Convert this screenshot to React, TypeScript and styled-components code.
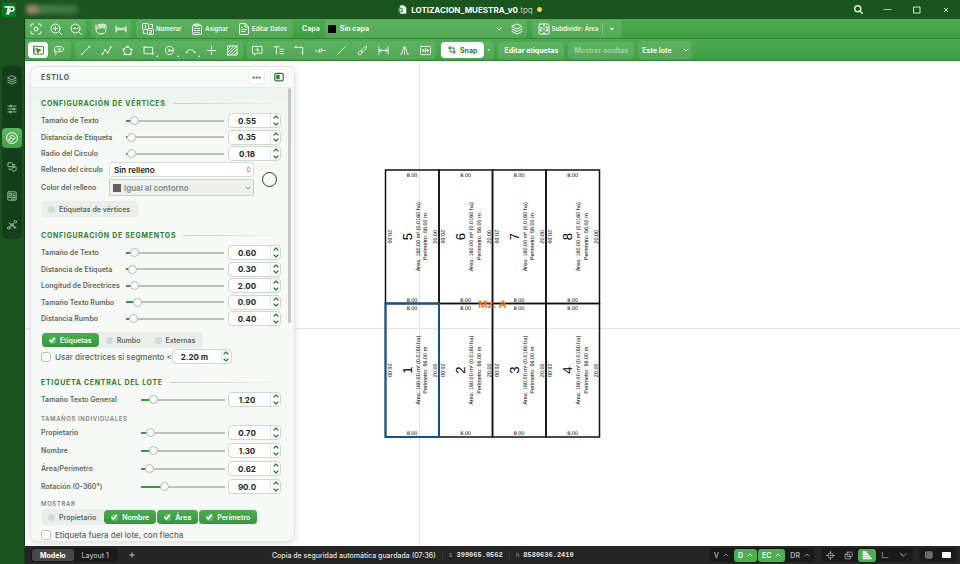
import React, { useId, useState } from "react";
import styled, { createGlobalStyle, css } from "styled-components";

const Global = createGlobalStyle`
  * { box-sizing: border-box; }
  html, body { margin: 0; padding: 0; }
  body { font-family: Inter, "Liberation Sans", sans-serif; font-size: 8px; overflow: hidden; }
  button, input, select { font: inherit; color: inherit; margin: 0; }
  button { border: 0; background: none; padding: 0; cursor: pointer; }
  h1, h2, h3, p { margin: 0; }
`;

/* ---------- icons ---------- */

const Svg = styled.svg<{ $size?: number; $w?: number }>`
  display: block;
  flex: none;
  width: ${(p) => p.$size ?? 12}px;
  height: ${(p) => p.$size ?? 12}px;
  fill: none;
  stroke: currentColor;
  stroke-width: ${(p) => p.$w ?? 2};
  stroke-linecap: round;
  stroke-linejoin: round;
`;

const glyphs: Record<string, React.ReactNode> = {
  fit: <><path d="M2 7V4a2 2 0 0 1 2-2h3M17 2h3a2 2 0 0 1 2 2v3M22 17v3a2 2 0 0 1-2 2h-3M7 22H4a2 2 0 0 1-2-2v-3" /><circle cx="12" cy="12" r="4" /></>,
  zoomIn: <><circle cx="11" cy="11" r="9" /><path d="m18 18 5 5M11 7v8M7 11h8" /></>,
  zoomOut: <><circle cx="11" cy="11" r="9" /><path d="m18 18 5 5M7 11h8" /></>,
  hand: <path d="M2 4v9c0 5 4 9 10 9s10-4 10-9V5a2 2 0 0 0-4 0v6V4a2 2 0 0 0-4 0v6V4a2 2 0 0 0-4 0v7V5a2 2 0 0 0-4 0v7c-1-1-3-1-4 0" />,
  measure: <path d="M2 6v12M22 6v12M3 12h18M6 9l-3 3 3 3M18 9l3 3-3 3M10 10v4M14 10v4" />,
  number: <><rect x="1" y="1" width="12" height="12" rx="2" /><rect x="11" y="11" width="12" height="12" rx="2" /><path d="M6 5l1-1v6M15 15h4v2l-4 3h4M17 3h4v5M3 16v5h5" /></>,
  clipboard: <><rect x="3" y="4" width="18" height="19" rx="3" /><path d="M8 2h8v4H8zM7 11h2M12 11h5M7 15h2M12 15h5M7 19h2M12 19h5" /></>,
  doc: <path d="M14 1H5a2 2 0 0 0-2 2v18a2 2 0 0 0 2 2h14a2 2 0 0 0 2-2V8zM14 1v7h7M7 13h10M7 17h7M7 9h2" />,
  layers: <path d="m12 2 10 5-10 5L2 7zM2 12l10 5 10-5M2 17l10 5 10-5" />,
  split: <><rect x="2" y="2" width="20" height="20" rx="2" /><path d="M12 2v5M12 11v3M12 18v4M5 9h3v3H5v4h3M15 8h4l-3 4h3v4h-4" /></>,
  pick: <><rect x="1" y="3" width="22" height="17" rx="1" /><path d="m8 8 9 3-4 2-2 4z" fill="currentColor" /><path d="M4 7v9" /></>,
  lasso: <><ellipse cx="13" cy="9" rx="10" ry="6" /><path d="M5 13c-3 1-3 4 0 4s3 4-1 5M10 9h7l-3 3" /></>,
  line: <><path d="M5 19 19 5" /><circle cx="4" cy="20" r="1" fill="currentColor" /><circle cx="20" cy="4" r="1" fill="currentColor" /></>,
  poly: <><path d="m3 20 6-9 6 6 6-12" /><circle cx="3" cy="20" r="1" fill="currentColor" /><circle cx="9" cy="11" r="1" fill="currentColor" /><circle cx="15" cy="17" r="1" fill="currentColor" /><circle cx="21" cy="5" r="1" fill="currentColor" /></>,
  penta: <><path d="m12 4 9 6-3 11H6L3 10z" /><circle cx="12" cy="4" r="1.5" fill="currentColor" /><circle cx="21" cy="10" r="1.5" fill="currentColor" /><circle cx="3" cy="10" r="1.5" fill="currentColor" /><circle cx="6" cy="20" r="1.5" fill="currentColor" /><circle cx="18" cy="20" r="1.5" fill="currentColor" /></>,
  rect: <><path d="M3 5h18v14H3z" /><circle cx="3" cy="5" r="1.5" fill="currentColor" /><circle cx="21" cy="19" r="1.5" fill="currentColor" /></>,
  circle: <><circle cx="12" cy="12" r="9" /><path d="M12 12h9" /><circle cx="12" cy="12" r="2" fill="currentColor" /></>,
  arc: <><path d="M3 16c3-8 15-8 18 0" /><circle cx="3" cy="16" r="1" fill="currentColor" /><circle cx="21" cy="16" r="1" fill="currentColor" /></>,
  cross: <path d="M12 3v18M3 12h18" />,
  hatch: <path d="M2 2h20v20H2zM2 9l7-7M2 16 16 2M2 22 22 2M9 22 22 9M16 22l6-6" />,
  note: <path d="M2 3h20v15H10l-5 4v-4H2zM12 7v7M8.500 10.500h7" />,
  text: <path d="M2 4h11M7.500 4v16M15 9h8M15 14h7M15 19h8" />,
  leader: <path d="M2 5h17v15M2 5l3-2M19 20l-2-3" />,
  breakLine: <path d="M1 13h6M17 12h6M9 16l2-8M13 16l2-8" />,
  slash: <path d="M4 20 20 4" />,
  brush: <path d="M21 3c-3-1-12 8-12 10l2 2c3 0 12-9 10-12zM9 13c-3-1-5 1-6 4s1 5 4 4 5-3 4-6" />,
  dim: <path d="M2 4v16M22 4v16M3 12h18M7 9l-4 3 4 3M17 9l4 3-4 3" />,
  road: <path d="M3 20h3L10 4M21 20h-3L14 4M12 5v3M12 11v3M12 17v3" />,
  fitBox: <><rect x="1" y="3" width="22" height="18" rx="2" /><path d="M5 12h14M8 9l-3 3 3 3M16 9l3 3-3 3M12 8v8" /></>,
  snap: <path d="M6 1v17h17M1 6h17v17" />,
  sliders: <><path d="M2 5h20M2 12h20M2 19h20" /><circle cx="9" cy="5" r="2" fill="#153f1b" /><circle cx="16" cy="12" r="2" fill="#153f1b" /><circle cx="8" cy="19" r="2" fill="#153f1b" /></>,
  palette: <><path d="M12 1C6 1 1 6 1 12s5 11 11 11c6 0 11-5 11-11S18 1 12 1z" /><path d="M7 10c3-5 10-3 11 1s-3 2-4 4 0 4-3 4-4-2-5-5" /><path d="m5 17 5-6 4 4" /></>,
  shapes: <><rect x="2" y="2" width="11" height="9" rx="2" /><rect x="12" y="10" width="10" height="12" rx="4" /><path d="M15 13h4M5 14v4h4M16 6h3" /></>,
  sheet: <><rect x="2" y="2" width="20" height="20" rx="2" /><path d="M6 6h5v5H6zM14 7h5M14 11h5M2 15h20M12 15v7M17 15v7" /></>,
  nodes: <><circle cx="4" cy="19" r="3" /><circle cx="12" cy="12" r="3" /><circle cx="20" cy="4" r="3" /><circle cx="19" cy="18" r="2" /><path d="M6 17l4-3M14 10l4-4M14 14l3 3M5 7l5 4" /></>,
  down: <path d="m4 8 8 8 8-8" />,
  up: <path d="m4 16 8-8 8 8" />,
  updown: <path d="m7 9 5-5 5 5M7 15l5 5 5-5" />,
  caret: <path d="M6 9h12l-6 7z" fill="currentColor" />,
  search: <><circle cx="10" cy="10" r="8" /><path d="m16 16 7 7" /></>,
  minus: <path d="M2 12h20" />,
  square: <path d="M3 3h18v18H3z" />,
  close: <path d="m5 5 14 14M19 5 5 19" />,
  dots: <><circle cx="4" cy="12" r="1.500" fill="currentColor" /><circle cx="12" cy="12" r="1.500" fill="currentColor" /><circle cx="20" cy="12" r="1.500" fill="currentColor" /></>,
  dock: <><rect x="2" y="3" width="20" height="18" rx="3" /><path d="M7 8h5v8H7z" fill="currentColor" /></>,
  plus: <path d="M12 3v18M3 12h18" />,
  target: <><circle cx="12" cy="12" r="7" /><circle cx="12" cy="12" r="1.500" fill="currentColor" /><path d="M12 1v5M12 18v5M1 12h5M18 12h5" /></>,
  overlap: <><rect x="8" y="3" width="14" height="12" rx="2" /><path d="M8 8H3v13h14v-6M8 9h7v6" /></>,
  weights: <path d="M3 5h7M3 10h11M3 15h15M3 20h19" strokeWidth="4" />,
  ortho: <path d="M4 3v17h17" />,
  polar: <path d="M3 6c4 0 6 5 9 10l10-8M7 12h4" />,
  grid: <path d="M3 3h18v18H3zM9 3v18M15 3v18M3 9h18M3 15h18" />,
};

const Icon = ({ name, size, w }: { name: string; size?: number; w?: number }) => (
  <Svg viewBox="0 0 24 24" $size={size} $w={w} aria-hidden="true">{glyphs[name]}</Svg>
);

/* ---------- frame ---------- */

const Page = styled.div`
  height: 100vh;
  display: flex;
  flex-direction: column;
  background: #1b521f;
`;

const TitleBar = styled.header`
  height: 19px;
  flex: none;
  display: grid;
  grid-template-columns: 1fr auto 1fr;
  align-items: center;
  padding: 0 10px 0 0;
  background: #1a541e;
  color: #fff;
`;

const Brand = styled.div`
  display: flex;
  align-items: center;
  gap: 10px;
  padding-left: 2px;
`;

const Logo = styled.svg`
  width: 14px;
  height: 14px;
  display: block;
`;

const Account = styled.div`
  width: 52px;
  height: 9px;
  border-radius: 4px;
  filter: blur(2px);
  background: linear-gradient(90deg, #a08570 0 10px, #4a7b4d 13px, #427545);
`;

const FileTitle = styled.h1`
  display: flex;
  align-items: center;
  gap: 4px;
  font-size: 8px;
  font-weight: 700;
  margin-right: 10px;
  small { font-size: 8px; font-weight: 400; color: #b9d3ba; }
`;

const Unsaved = styled.i`
  width: 5px;
  height: 5px;
  border-radius: 50%;
  background: #f0d24c;
`;

const WindowButtons = styled.div`
  display: flex;
  justify-content: flex-end;
  align-items: center;
  gap: 20px;
  color: #d3ecd4;
`;

const PlainButton = styled.button`
  display: grid;
  place-items: center;
  min-width: 9px;
  height: 12px;
  color: inherit;
`;

const Body = styled.div`
  flex: 1;
  min-height: 0;
  display: flex;
`;

const Rail = styled.nav`
  width: 25px;
  flex: none;
  padding: 47px 2px 0;
  border-right: 1px solid #123c16;
`;

const RailGroup = styled.div`
  display: flex;
  flex-direction: column;
  align-items: center;
  gap: 9px;
  padding: 4px 0;
  border-radius: 5px;
  background: #153f1b;
`;

const RailButton = styled.button<{ $active?: boolean }>`
  width: 20px;
  height: 20px;
  display: grid;
  place-items: center;
  border-radius: 4px;
  color: ${(p) => (p.$active ? "#fff" : "#a5cba8")};
  background: ${(p) => (p.$active ? "linear-gradient(#5cb860, #43a047)" : "none")};
`;

const Main = styled.main`
  flex: 1;
  min-width: 0;
  display: flex;
  flex-direction: column;
`;

/* ---------- toolbars ---------- */

const Toolbar = styled.div<{ $tall?: boolean }>`
  height: ${(p) => (p.$tall ? 22 : 20)}px;
  flex: none;
  display: flex;
  align-items: center;
  gap: ${(p) => (p.$tall ? 4 : 5)}px;
  padding: ${(p) => (p.$tall ? 1 : 0)}px 0 0 1px;
  color: #f1fbf1;
  background: linear-gradient(#4cab50, #3f9d43);
  border-bottom: 1px solid #358a3a;
  font-weight: 600;
`;

const Group = styled.div<{ $gap?: number; $pad?: number }>`
  height: 18px;
  display: flex;
  align-items: center;
  gap: ${(p) => p.$gap ?? 0}px;
  padding: 0 ${(p) => p.$pad ?? 0}px;
  border-radius: 4px;
  background: rgba(255, 255, 255, 0.1);
`;

const Tool = styled.button<{ $active?: boolean; $corner?: boolean; $wide?: boolean }>`
  position: relative;
  width: ${(p) => (p.$wide ? 21 : 20)}px;
  height: 16px;
  display: grid;
  place-items: center;
  border-radius: 4px;
  ${(p) => p.$active && css`background: #fff; color: #2e7d32;`}
  ${(p) => p.$corner && css`
    &::after {
      content: "";
      position: absolute;
      right: 1px;
      bottom: 1px;
      border: 1px solid currentColor;
      border-top-color: transparent;
      border-left-color: transparent;
    }
  `}
`;

const TextTool = styled.button`
  height: 18px;
  display: flex;
  align-items: center;
  gap: 2px;
  font-size: 6px;
  font-weight: 600;
`;

const PillButton = styled.button<{ $dim?: boolean }>`
  height: 17px;
  padding: 0 6px;
  border-radius: 4px;
  font-size: 7px;
  font-weight: 700;
  background: rgba(255, 255, 255, 0.12);
  color: ${(p) => (p.$dim ? "#9ed3a0" : "#fff")};
`;

const SnapButton = styled.button`
  height: 16px;
  display: flex;
  align-items: center;
  gap: 4px;
  padding: 0 7px;
  border-radius: 4px;
  background: #fff;
  color: #2e7d32;
  font-size: 7px;
  font-weight: 700;
`;

const BarLabel = styled.label`
  padding-left: 4px;
  font-size: 7px;
  font-weight: 700;
`;

const SelectShell = styled.div<{ $width: number; $pad?: number }>`
  display: grid;
  align-items: center;
  width: ${(p) => p.$width}px;
  > * { grid-area: 1 / 1; }
  > svg { justify-self: end; margin-right: ${(p) => p.$pad ?? 4}px; pointer-events: none; }
`;

const BarSelect = styled.select<{ $indent: number }>`
  appearance: none;
  width: 100%;
  height: 18px;
  padding: 0 0 0 ${(p) => p.$indent}px;
  border: 0;
  background: none;
  font-size: 7px;
  font-weight: 700;
  outline: none;
`;

const Swatch = styled.i<{ $color: string; $left: number }>`
  width: 8px;
  height: 8px;
  margin-left: ${(p) => p.$left}px;
  background: ${(p) => p.$color};
  z-index: 1;
`;

const Split = styled.i`
  width: 1px;
  height: 12px;
  background: rgba(255, 255, 255, 0.25);
`;

/* ---------- workspace ---------- */

const Workspace = styled.div`
  position: relative;
  flex: 1;
  min-height: 0;
  overflow: hidden;
  background: #fff;
`;

const Drawing = styled.svg`
  display: block;
  width: 100%;
  height: 100%;
  font-family: "Liberation Sans", Arial, sans-serif;
  text-anchor: middle;
  text-rendering: geometricPrecision;
`;

const Panel = styled.aside`
  position: absolute;
  left: 6px;
  top: 6px;
  bottom: 5px;
  width: 263px;
  display: flex;
  flex-direction: column;
  overflow: hidden;
  border-radius: 7px;
  background: #f7f9f7;
  box-shadow: 0 0 0 1px #e3e7e4, 0 2px 8px rgba(0, 0, 0, 0.16);
  color: #5b685e;
`;

const PanelHead = styled.div`
  height: 21px;
  flex: none;
  display: flex;
  align-items: center;
  gap: 7px;
  padding: 0 8px 0 10px;
  border-bottom: 1px solid #e8ede9;
  background: #f9fbf9;
  h2 { flex: 1; font-size: 7px; font-weight: 700; letter-spacing: 0.1em; color: #4c5a50; }
`;

const HeadButton = styled.button`
  width: 15px;
  height: 14px;
  display: grid;
  place-items: center;
  border-radius: 3px;
  background: #fff;
  color: #2e7d32;
  box-shadow: 0 0 2px rgba(0, 0, 0, 0.15);
`;

const PanelBody = styled.div`
  position: relative;
  flex: 1;
  min-height: 0;
  overflow: hidden;
  padding: 9px 13px 0 10px;
  background: linear-gradient(#edf5ee, #f7f9f7 60px);
`;

const ScrollThumb = styled.div`
  position: absolute;
  right: 3px;
  top: 0;
  width: 3px;
  height: 235px;
  border-radius: 2px;
  background: #c3c8c5;
`;

const SectionTitle = styled.h3`
  display: flex;
  align-items: center;
  gap: 7px;
  height: 12px;
  margin-right: 9px;
  font-size: 7px;
  font-weight: 700;
  letter-spacing: 0.1em;
  color: #2e7d32;
  &::after { content: ""; flex: 1; height: 1px; background: linear-gradient(90deg, #c3d2c5, #edf1ee); }
`;

const SubTitle = styled.h3<{ $top: number }>`
  height: 9px;
  line-height: 9px;
  margin-top: ${(p) => p.$top}px;
  font-size: 6px;
  font-weight: 600;
  letter-spacing: 0.1em;
  color: #7c8780;
`;

const Rows = styled.div<{ $height: number; $top?: number }>`
  display: flex;
  flex-direction: column;
  justify-content: space-between;
  min-height: ${(p) => p.$height}px;
  margin-top: ${(p) => p.$top ?? 4}px;
`;

const Row = styled.div<{ $wide?: boolean }>`
  display: grid;
  grid-template-columns: ${(p) => (p.$wide ? 100 : 85)}px 1fr 53px;
  align-items: center;
  height: 15px;
  > label { font-size: 7px; font-weight: 600; white-space: nowrap; }
  > input { margin-right: ${(p) => (p.$wide ? 3 : 4)}px; }
`;

const Range = styled.input`
  appearance: none;
  min-width: 0;
  height: 10px;
  background: linear-gradient(#3c9a41, #3c9a41) 0 50% / var(--fill) 2px no-repeat,
    linear-gradient(#bcbfbd, #bcbfbd) 0 50% / 100% 2px no-repeat;
  outline: none;
  &::-webkit-slider-thumb {
    appearance: none;
    width: 9px;
    height: 9px;
    border-radius: 50%;
    border: 1px solid #b3b8b4;
    background: #fff;
  }
`;

const SpinBox = styled.div<{ $w?: number }>`
  width: ${(p) => p.$w ?? 53}px;
  height: 15px;
  display: flex;
  border: 1px solid #d0d7d1;
  border-radius: 4px;
  background: #fff;
  overflow: hidden;
  input {
    flex: 1;
    min-width: 0;
    padding: 0 5px 0 0;
    border: 0;
    outline: none;
    background: none;
    text-align: center;
    font-size: 8px;
    font-weight: 700;
    color: #232825;
  }
`;

const Steps = styled.div`
  width: 10px;
  display: flex;
  flex-direction: column;
  border-left: 1px solid #e0e6e1;
  color: #2e7d32;
  button { flex: 1; display: grid; place-items: center; }
`;

const FillGrid = styled.div`
  display: grid;
  grid-template-columns: 68px 145px 1fr;
  align-items: center;
  row-gap: 2px;
  margin-top: 1px;
  font-size: 7px;
  font-weight: 600;
  label { white-space: nowrap; }
`;

const Ring = styled.i`
  grid-area: 1 / 3 / 3 / 4;
  justify-self: end;
  margin-right: 4px;
  width: 15px;
  height: 15px;
  border: 1px solid #333;
  border-radius: 50%;
`;

const PanelSelect = styled.select<{ $disabled?: boolean }>`
  appearance: none;
  width: 100%;
  height: ${(p) => (p.$disabled ? 17 : 15)}px;
  padding: 0 0 0 ${(p) => (p.$disabled ? 14 : 4)}px;
  border: 1px solid ${(p) => (p.$disabled ? "#cbd1cc" : "#d8ded9")};
  border-radius: ${(p) => (p.$disabled ? 1 : 3)}px;
  background: ${(p) => (p.$disabled ? "#eef0ee" : "#fff")};
  color: ${(p) => (p.$disabled ? "#7f8781" : "#222")};
  font-size: ${(p) => (p.$disabled ? 8 : 8)}px;
  font-weight: 600;
  opacity: 1;
  outline: none;
`;

const ChipBar = styled.div<{ $top: number; $gap?: number }>`
  width: fit-content;
  display: flex;
  gap: ${(p) => p.$gap ?? 1}px;
  margin-top: ${(p) => p.$top}px;
  padding: 1px;
  border-radius: 4px;
  background: #ebefec;
`;

const Chip = styled.label<{ $on: boolean }>`
  height: 14px;
  display: flex;
  align-items: center;
  gap: 4px;
  padding: 0 7px 0 6px;
  border-radius: 4px;
  font-size: 7px;
  font-weight: 600;
  white-space: nowrap;
  color: ${(p) => (p.$on ? "#fff" : "#5b685e")};
  background: ${(p) => (p.$on ? "linear-gradient(#4cab50, #369540)" : "none")};
  span { display: grid; place-items: center; > * { grid-area: 1 / 1; } }
  input {
    appearance: none;
    width: 7px;
    height: 7px;
    border-radius: 50%;
    background: ${(p) => (p.$on ? "rgba(255,255,255,.25)" : "#d5dad6")};
  }
  svg { pointer-events: none; }
`;

const CheckRow = styled.div<{ $top: number }>`
  display: flex;
  align-items: center;
  height: 15px;
  margin-top: ${(p) => p.$top}px;
  font-size: 8px;
  font-weight: 500;
  label { display: flex; align-items: center; gap: 4px; white-space: nowrap; }
  label input {
    appearance: none;
    width: 10px;
    height: 10px;
    border: 1px solid #b9c3bb;
    border-radius: 3px;
    background: #fff;
  }
`;

/* ---------- status bar ---------- */

const Status = styled.footer`
  height: 18px;
  flex: none;
  display: flex;
  align-items: center;
  justify-content: space-between;
  padding: 0 3px 0 6px;
  background: #252525;
  color: #e2e2e2;
  font-size: 7px;
  font-weight: 500;
`;

const Cluster = styled.div<{ $gap?: number }>`
  display: flex;
  align-items: center;
  gap: ${(p) => p.$gap ?? 6}px;
`;

const DarkGroup = styled.div<{ $gap?: number; $pad?: number }>`
  height: 14px;
  display: flex;
  align-items: center;
  gap: ${(p) => p.$gap ?? 0}px;
  padding: 0 ${(p) => p.$pad ?? 1}px;
  border-radius: 4px;
  background: #1a1a1a;
`;

const Tab = styled.button<{ $active?: boolean }>`
  height: 12px;
  padding: 0 8px;
  border-radius: 3px;
  font-weight: ${(p) => (p.$active ? 700 : 500)};
  color: ${(p) => (p.$active ? "#fff" : "#b5b5b5")};
  background: ${(p) => (p.$active ? "#484848" : "none")};
`;

const Coord = styled.span`
  font-family: "Liberation Mono", monospace;
  font-size: 7px;
  font-weight: 700;
  small { font-size: 6px; color: #8a8a8a; margin-right: 4px; font-weight: 400; }
`;

const Divider = styled.i`
  width: 1px;
  height: 8px;
  background: #3c3c3c;
`;

const ModeButton = styled.button<{ $on?: boolean }>`
  height: 13px;
  display: flex;
  align-items: center;
  gap: 4px;
  padding: 0 4px;
  border-radius: 3px;
  font-weight: 600;
  color: ${(p) => (p.$on ? "#fff" : "#b0b0b0")};
  background: ${(p) => (p.$on ? "#4caf50" : "none")};
`;

const IconMode = styled.button<{ $on?: boolean }>`
  width: 18px;
  height: 13px;
  display: grid;
  place-items: center;
  border-radius: 3px;
  color: ${(p) => (p.$on ? "#fff" : "#b0b0b0")};
  background: ${(p) => (p.$on ? "#4caf50" : "none")};
`;

const Blank = styled.i`
  width: 9px;
  height: 6px;
  border-radius: 1px;
  background: #fff;
`;

/* ---------- panel controls ---------- */

function Spinner({ id, label, value, width }: { id?: string; label: string; value: string; width?: number }) {
  const [text, setText] = useState(value);
  const unit = value.endsWith(" m") ? " m" : "";
  const digits = value.replace(" m", "").split(".")[1].length;
  const step = (d: number) => setText((parseFloat(text) + d / 10 ** digits).toFixed(digits) + unit);
  return (
    <SpinBox $w={width}>
      <input id={id} aria-label={label} value={text} onChange={(e) => setText(e.target.value)} />
      <Steps>
        <button aria-label={`Aumentar ${label}`} onClick={() => step(1)}><Icon name="up" size={6} w={5} /></button>
        <button aria-label={`Reducir ${label}`} onClick={() => step(-1)}><Icon name="down" size={6} w={5} /></button>
      </Steps>
    </SpinBox>
  );
}

function Setting({ label, value, at, wide }: { label: string; value: string; at: number; wide?: boolean }) {
  const id = useId();
  const [pos, setPos] = useState(at);
  return (
    <Row $wide={wide}>
      <label htmlFor={id}>{label}</label>
      <Range
        id={id}
        type="range"
        min={0}
        max={100}
        value={pos}
        onChange={(e) => setPos(Number(e.target.value))}
        style={{ "--fill": `${pos + 2}%` } as React.CSSProperties}
      />
      <Spinner label={label} value={value} />
    </Row>
  );
}

function Toggle({ label, on }: { label: string; on?: boolean }) {
  const [checked, setChecked] = useState(!!on);
  return (
    <Chip $on={checked}>
      <span>
        <input type="checkbox" checked={checked} onChange={() => setChecked(!checked)} />
        {checked && <Svg viewBox="0 0 24 24" $size={8} $w={4}><path d="m5 13 5 5L20 6" /></Svg>}
      </span>
      {label}
    </Chip>
  );
}

function StylePanel() {
  return (
    <Panel>
      <PanelHead>
        <h2>ESTILO</h2>
        <HeadButton aria-label="Más opciones"><Icon name="dots" size={9} w={3} /></HeadButton>
        <HeadButton aria-label="Acoplar panel"><Icon name="dock" size={10} w={3} /></HeadButton>
      </PanelHead>
      <PanelBody>
        <SectionTitle>CONFIGURACIÓN DE VÉRTICES</SectionTitle>
        <Rows $height={48}>
          <Setting label="Tamaño de Texto" value="0.55" at={4} />
          <Setting label="Distancia de Etiqueta" value="0.35" at={1} />
          <Setting label="Radio del Círculo" value="0.18" at={1} />
        </Rows>
        <FillGrid>
          <label htmlFor="fill">Relleno del círculo</label>
          <SelectShell $width={145} $pad={2}>
            <PanelSelect id="fill"><option>Sin relleno</option></PanelSelect>
            <Icon name="updown" size={7} w={3} />
          </SelectShell>
          <label htmlFor="fillColor">Color del relleno</label>
          <SelectShell $width={145} $pad={3}>
            <PanelSelect id="fillColor" $disabled disabled><option>Igual al contorno</option></PanelSelect>
            <Swatch $color="#5f6360" $left={4} />
            <Icon name="down" size={6} w={3} />
          </SelectShell>
          <Ring />
        </FillGrid>
        <ChipBar $top={5}><Toggle label="Etiquetas de vértices" /></ChipBar>
        <Rows $height={12} $top={12}><SectionTitle>CONFIGURACIÓN DE SEGMENTOS</SectionTitle></Rows>
        <Rows $height={81}>
          <Setting label="Tamaño de Texto" value="0.60" at={5} />
          <Setting label="Distancia de Etiqueta" value="0.30" at={2} />
          <Setting label="Longitud de Directrices" value="2.00" at={5} />
          <Setting label="Tamaño Texto Rumbo" value="0.90" at={8} />
          <Setting label="Distancia Rumbo" value="0.40" at={3} />
        </Rows>
        <ChipBar $top={6} $gap={1}>
          <Toggle label="Etiquetas" on />
          <Toggle label="Rumbo" />
          <Toggle label="Externas" />
        </ChipBar>
        <CheckRow $top={1}>
          <label><input type="checkbox" />Usar directrices si segmento &lt;</label>
          <Spinner label="Segmento mínimo" value="2.20 m" width={60} />
        </CheckRow>
        <Rows $height={12} $top={12}><SectionTitle>ETIQUETA CENTRAL DEL LOTE</SectionTitle></Rows>
        <Rows $height={15}><Setting wide label="Tamaño Texto General" value="1.20" at={10} /></Rows>
        <SubTitle $top={7}>TAMAÑOS INDIVIDUALES</SubTitle>
        <Rows $height={69} $top={2}>
          <Setting wide label="Propietario" value="0.70" at={6} />
          <Setting wide label="Nombre" value="1.30" at={11} />
          <Setting wide label="Área/Perímetro" value="0.62" at={5} />
          <Setting wide label="Rotación (0-360°)" value="90.0" at={25} />
        </Rows>
        <SubTitle $top={5}>MOSTRAR</SubTitle>
        <ChipBar $top={1} $gap={1}>
          <Toggle label="Propietario" />
          <Toggle label="Nombre" on />
          <Toggle label="Área" on />
          <Toggle label="Perímetro" on />
        </ChipBar>
        <CheckRow $top={2}>
          <label><input type="checkbox" />Etiqueta fuera del lote, con flecha</label>
        </CheckRow>
        <ScrollThumb />
      </PanelBody>
    </Panel>
  );
}

/* ---------- plan ---------- */

const LOT_W = 107;
const LOT_H = 267;
const ORIGIN = { x: 721, y: 218 };
const lots = [5, 6, 7, 8, 1, 2, 3, 4].map((n, i) => ({
  n,
  x: ORIGIN.x + (i % 4) * LOT_W,
  y: ORIGIN.y + Math.floor(i / 4) * LOT_H,
}));

function Lot({ n, x, y }: { n: number; x: number; y: number }) {
  const mid = LOT_H / 2;
  return (
    <g transform={`translate(${x} ${y})`} fontSize="11" fill="#000">
      <rect width={LOT_W} height={LOT_H} fill="none" stroke="#111" strokeWidth="3" />
      <text x="53" y="13">8.00</text>
      <text x="53" y={LOT_H - 4}>8.00</text>
      <text transform={`translate(4 ${mid}) rotate(90)`}>20.00</text>
      <text transform={`translate(103 ${mid}) rotate(-90)`}>20.00</text>
      <text transform={`translate(52 ${mid}) rotate(-90)`} fontSize="26" fill="#000">{n}</text>
      <text transform={`translate(68 ${mid}) rotate(-90)`}>Área: 160.00 m² (0.0160 ha)</text>
      <text transform={`translate(83 ${mid}) rotate(-90)`}>Perímetro: 56.00 m</text>
    </g>
  );
}

function Plan() {
  return (
    <Drawing viewBox="0 0 1870 970" preserveAspectRatio="xMidYMid slice">
      <path d="M789 0V970M0 535H1870" stroke="#e3e5e4" strokeWidth="2" />
      {lots.map((lot) => <Lot key={lot.n} {...lot} />)}
      <rect x={ORIGIN.x} y={ORIGIN.y + LOT_H} width={LOT_W} height={LOT_H} fill="none" stroke="#174f93" strokeWidth="4" />
      <text x="935" y="494" fontSize="22" fontWeight="700" fill="#f57c00">Mz. A</text>
    </Drawing>
  );
}

/* ---------- app ---------- */

const rail = ["layers", "sliders", "palette", "shapes", "sheet", "nodes"];
const drawTools = ["line", "poly", "penta", "rect", "circle", "arc", "cross", "hatch"];
const noteTools = ["note", "text", "leader", "breakLine", "slash", "brush", "dim", "road", "fitBox"];
const withMenu = ["rect", "circle", "arc"];

export default function App() {
  return (
    <Page>
      <Global />
      <TitleBar>
        <Brand>
          <Logo viewBox="0 0 14 14" aria-label="Logo">
            <rect width="14" height="14" rx="1" fill="#087d23" />
            <path d="M3 4h7a2 2 0 0 1 0 4H7.500M6.500 4.500 5 11M8 6l-1.500 5" fill="none" stroke="#fff" strokeWidth="1.400" strokeLinecap="round" strokeLinejoin="round" />
          </Logo>
          <Account />
        </Brand>
        <FileTitle>
          <Svg viewBox="0 0 24 24" $size={9}>
            <path d="M7 2h9l5 5v15H7z" fill="#fff" stroke="#fff" />
            <path d="M2 9h10v9H2z" fill="#43a047" stroke="#43a047" />
            <path d="M5 12h4M7 12v4" stroke="#fff" />
          </Svg>
          <span>LOTIZACION_MUESTRA_v0<small>.tpq</small></span>
          <Unsaved />
        </FileTitle>
        <WindowButtons>
          <PlainButton aria-label="Buscar"><Icon name="search" size={9} w={4} /></PlainButton>
          <PlainButton aria-label="Minimizar"><Icon name="minus" size={9} w={2} /></PlainButton>
          <PlainButton aria-label="Maximizar"><Icon name="square" size={8} w={3} /></PlainButton>
          <PlainButton aria-label="Cerrar"><Icon name="close" size={6} w={4} /></PlainButton>
        </WindowButtons>
      </TitleBar>
      <Body>
        <Rail>
          <RailGroup>
            {rail.map((n) => (
              <RailButton key={n} $active={n === "palette"} aria-label={n}>
                <Icon name={n} size={n === "palette" ? 12 : 10} />
              </RailButton>
            ))}
          </RailGroup>
        </Rail>
        <Main>
          <Toolbar>
            <Group>
              <Tool aria-label="Encuadrar"><Icon name="fit" /></Tool>
              <Tool aria-label="Acercar"><Icon name="zoomIn" /></Tool>
              <Tool aria-label="Alejar"><Icon name="zoomOut" /></Tool>
            </Group>
            <Group>
              <Tool aria-label="Mover"><Icon name="hand" /></Tool>
              <Tool aria-label="Medir"><Icon name="measure" /></Tool>
            </Group>
            <Group $gap={10} $pad={6}>
              <TextTool><Icon name="number" />Numerar</TextTool>
              <TextTool><Icon name="clipboard" />Asignar</TextTool>
              <TextTool><Icon name="doc" />Editar Datos</TextTool>
            </Group>
            <BarLabel htmlFor="layer">Capa</BarLabel>
            <Group>
              <SelectShell $width={182} $pad={5}>
                <BarSelect id="layer" $indent={15}><option>Sin capa</option></BarSelect>
                <Swatch $color="#000" $left={3} />
                <Icon name="down" size={6} w={4} />
              </SelectShell>
              <Tool aria-label="Capas"><Icon name="layers" /></Tool>
            </Group>
            <Group $gap={4} $pad={6}>
              <TextTool><Icon name="split" />Subdividir: Área</TextTool>
              <Split />
              <PlainButton aria-label="Opciones de subdivisión"><Icon name="caret" size={6} /></PlainButton>
            </Group>
          </Toolbar>
          <Toolbar $tall>
            <Group $pad={2}>
              <Tool $active aria-label="Seleccionar"><Icon name="pick" size={11} /></Tool>
              <Tool $wide aria-label="Lazo"><Icon name="lasso" size={11} /></Tool>
            </Group>
            <Group>
              {drawTools.map((n) => (
                <Tool key={n} $wide aria-label={n} $corner={withMenu.includes(n)}><Icon name={n} size={11} /></Tool>
              ))}
            </Group>
            <Group>
              {noteTools.map((n) => (
                <Tool key={n} $wide aria-label={n}><Icon name={n} size={11} /></Tool>
              ))}
            </Group>
            <Group $gap={0} $pad={1}>
              <SnapButton><Icon name="snap" size={8} w={3} />Snap</SnapButton>
              <PlainButton aria-label="Opciones de snap"><Icon name="caret" size={4} /></PlainButton>
            </Group>
            <PillButton>Editar etiquetas</PillButton>
            <PillButton $dim>Mostrar ocultas</PillButton>
            <Group>
              <SelectShell $width={54} $pad={3}>
                <BarSelect aria-label="Ámbito" $indent={4}><option>Este lote</option></BarSelect>
                <Icon name="down" size={6} w={4} />
              </SelectShell>
            </Group>
          </Toolbar>
          <Workspace>
            <Plan />
            <StylePanel />
          </Workspace>
          <Status>
            <Cluster $gap={10}>
              <DarkGroup>
                <Tab $active>Modelo</Tab>
                <Tab>Layout 1</Tab>
              </DarkGroup>
              <PlainButton aria-label="Nuevo layout"><Icon name="plus" size={6} w={3} /></PlainButton>
            </Cluster>
            <Cluster>
              <span>Copia de seguridad automática guardada (07:36)</span>
              <Divider />
              <Coord><small>E</small>399065.0562</Coord>
              <Divider />
              <Coord><small>N</small>8580636.2410</Coord>
            </Cluster>
            <Cluster>
              <DarkGroup $gap={1}>
                <ModeButton>V<Icon name="up" size={6} w={3} /></ModeButton>
                <ModeButton $on>D<Icon name="up" size={6} w={3} /></ModeButton>
                <ModeButton $on>EC<Icon name="up" size={6} w={3} /></ModeButton>
                <ModeButton>DR<Icon name="up" size={6} w={3} /></ModeButton>
              </DarkGroup>
              <DarkGroup>
                <IconMode aria-label="Referencia"><Icon name="target" size={9} /></IconMode>
                <IconMode aria-label="Superposición"><Icon name="overlap" size={9} /></IconMode>
                <IconMode $on aria-label="Grosor de línea"><Icon name="weights" size={10} /></IconMode>
                <IconMode aria-label="Orto"><Icon name="ortho" size={8} /></IconMode>
                <IconMode aria-label="Polar"><Icon name="polar" size={8} /></IconMode>
              </DarkGroup>
              <DarkGroup>
                <IconMode aria-label="Cuadrícula"><Icon name="grid" size={8} /></IconMode>
                <IconMode aria-label="Fondo"><Blank /></IconMode>
              </DarkGroup>
            </Cluster>
          </Status>
        </Main>
      </Body>
    </Page>
  );
}
